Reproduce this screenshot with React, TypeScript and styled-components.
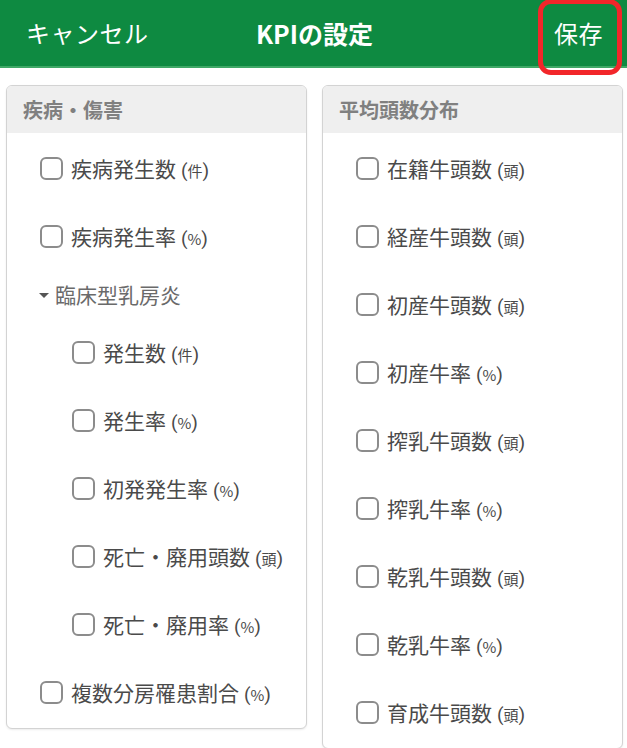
import React from "react";
import styled, { createGlobalStyle } from "styled-components";

const GlobalStyle = createGlobalStyle`
  html, body {
    margin: 0;
    padding: 0;
    background: #ffffff;
    font-family: "Noto Sans CJK JP", "Noto Sans", sans-serif;
    overflow: hidden;
  }
`;

interface KpiItem {
  label: string;
  unit: string;
}

interface KpiGroup {
  title: string;
  items: KpiItem[];
}

type Entry = { kind: "item"; item: KpiItem } | { kind: "group"; group: KpiGroup };

const diseaseEntries: Entry[] = [
  { kind: "item", item: { label: "疾病発生数", unit: "件" } },
  { kind: "item", item: { label: "疾病発生率", unit: "%" } },
  {
    kind: "group",
    group: {
      title: "臨床型乳房炎",
      items: [
        { label: "発生数", unit: "件" },
        { label: "発生率", unit: "%" },
        { label: "初発発生率", unit: "%" },
        { label: "死亡・廃用頭数", unit: "頭" },
        { label: "死亡・廃用率", unit: "%" },
      ],
    },
  },
  { kind: "item", item: { label: "複数分房罹患割合", unit: "%" } },
];

const herdEntries: Entry[] = [
  { label: "在籍牛頭数", unit: "頭" },
  { label: "経産牛頭数", unit: "頭" },
  { label: "初産牛頭数", unit: "頭" },
  { label: "初産牛率", unit: "%" },
  { label: "搾乳牛頭数", unit: "頭" },
  { label: "搾乳牛率", unit: "%" },
  { label: "乾乳牛頭数", unit: "頭" },
  { label: "乾乳牛率", unit: "%" },
  { label: "育成牛頭数", unit: "頭" },
].map((item) => ({ kind: "item" as const, item }));

const Page = styled.div`
  width: 627px;
  height: 748px;
  overflow: hidden;
`;

const Header = styled.header`
  height: 68px;
  background-color: #0e8a41;
  border-bottom: 2px solid #3fa866;
  box-sizing: border-box;
  display: grid;
  grid-template-columns: 1fr auto 1fr;
  align-items: center;
  padding: 0 24px 0 26px;
  color: #ffffff;
  position: relative;
`;

const HeaderButton = styled.button<{ $align: "left" | "right" }>`
  justify-self: ${(p) => (p.$align === "left" ? "start" : "end")};
  background: none;
  border: none;
  padding: 0;
  color: #ffffff;
  font-family: inherit;
  font-size: 24px;
  line-height: 34px;
  font-weight: 400;
  letter-spacing: 0.5px;
  position: relative;
`;

const Highlight = styled.span`
  position: absolute;
  left: -16px;
  right: -19px;
  top: -17px;
  bottom: -25px;
  border: 5px solid #f2262a;
  border-radius: 13px;
  pointer-events: none;
`;

const Title = styled.h1`
  margin: 0;
  font-size: 25px;
  font-weight: 700;
  color: #ffffff;
`;

const Columns = styled.div`
  display: grid;
  grid-template-columns: 301px 301px;
  gap: 15px;
  padding: 17px 5px 0 6px;
  align-items: start;
`;

const Card = styled.section`
  border: 1px solid #d3d3d3;
  border-radius: 6px;
  background: #ffffff;
  box-shadow: 0 1px 2px rgba(0, 0, 0, 0.08);
  overflow: hidden;
`;

const CardHeader = styled.div`
  height: 47px;
  background-color: #efefef;
  display: flex;
  align-items: center;
  padding-left: 16px;
  font-size: 20px;
  font-weight: 700;
  color: #808080;
`;

const CardBody = styled.div`
  padding: 1px 0 2px;
`;

const Row = styled.label<{ $indent: number }>`
  height: 68px;
  display: flex;
  align-items: center;
  padding-left: ${(p) => 33 + p.$indent}px;
  gap: 8px;
  color: #4a4a4a;
  font-size: 21px;
  white-space: nowrap;
`;

const Box = styled.span`
  width: 23px;
  height: 23px;
  box-sizing: border-box;
  border: 2px solid #8c8c8c;
  border-radius: 6px;
  flex-shrink: 0;
`;

const Unit = styled.span`
  font-size: 19px;
  margin-left: 5px;
  font-family: "Roboto", "Noto Sans CJK JP", sans-serif;
  color: #4a4a4a;
`;

const UnitInner = styled.span`
  font-size: 15px;
  font-family: "Noto Sans CJK JP", sans-serif;
`;

const GroupRow = styled.div`
  height: 48px;
  display: flex;
  align-items: center;
  padding-left: 32px;
  gap: 6px;
  color: #6a6a6a;
  font-size: 21px;
`;

const Caret = styled.span`
  width: 0;
  height: 0;
  border-left: 5px solid transparent;
  border-right: 5px solid transparent;
  border-top: 5px solid #555555;
  margin-top: 2px;
`;

const KpiRow: React.FC<{ item: KpiItem; indent?: number }> = ({ item, indent = 0 }) => (
  <Row $indent={indent}>
    <Box />
    <span>
      {item.label}
      <Unit>
        (<UnitInner>{item.unit}</UnitInner>)
      </Unit>
    </span>
  </Row>
);

const KpiCard: React.FC<{ title: string; entries: Entry[] }> = ({ title, entries }) => (
  <Card>
    <CardHeader>{title}</CardHeader>
    <CardBody>
      {entries.map((entry, index) =>
        entry.kind === "item" ? (
          <KpiRow key={index} item={entry.item} />
        ) : (
          <React.Fragment key={index}>
            <GroupRow>
              <Caret />
              {entry.group.title}
            </GroupRow>
            {entry.group.items.map((item) => (
              <KpiRow key={item.label} item={item} indent={32} />
            ))}
          </React.Fragment>
        )
      )}
    </CardBody>
  </Card>
);

const App: React.FC = () => (
  <Page>
    <GlobalStyle />
    <Header>
      <HeaderButton $align="left">キャンセル</HeaderButton>
      <Title>KPIの設定</Title>
      <HeaderButton $align="right">
        保存
        <Highlight />
      </HeaderButton>
    </Header>
    <Columns>
      <KpiCard title="疾病・傷害" entries={diseaseEntries} />
      <KpiCard title="平均頭数分布" entries={herdEntries} />
    </Columns>
  </Page>
);

export default App;
